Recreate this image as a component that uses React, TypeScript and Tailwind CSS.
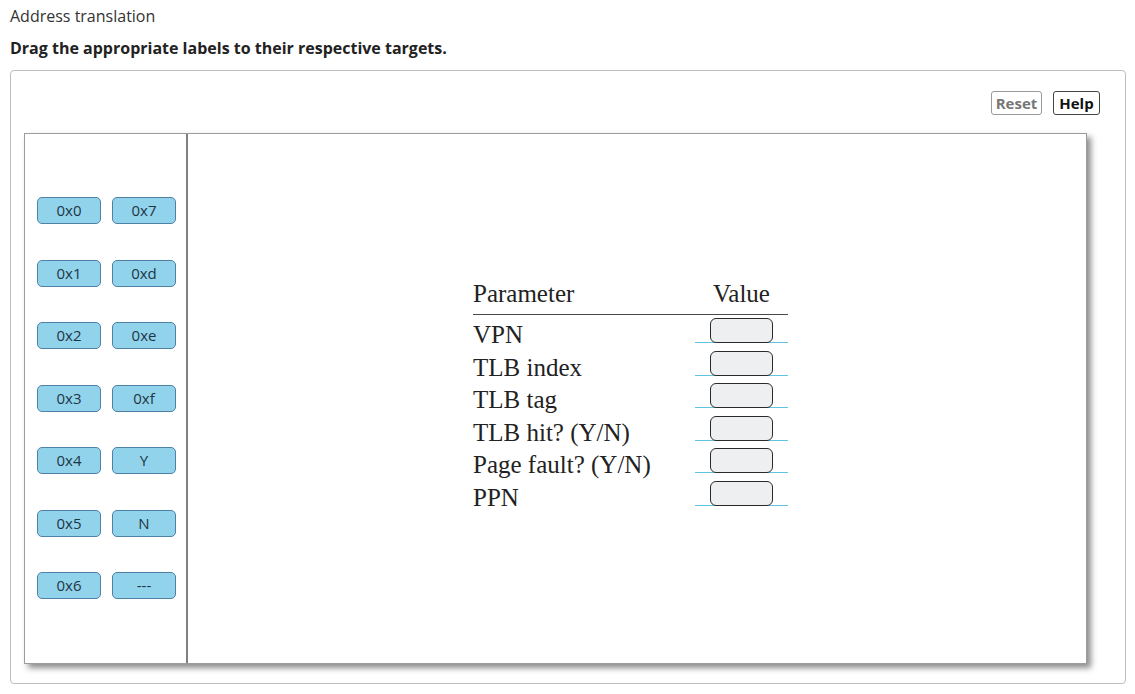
const labels: [string, string][] = [
  ['0x0', '0x7'],
  ['0x1', '0xd'],
  ['0x2', '0xe'],
  ['0x3', '0xf'],
  ['0x4', 'Y'],
  ['0x5', 'N'],
  ['0x6', '---'],
];

const params = [
  'VPN',
  'TLB index',
  'TLB tag',
  'TLB hit? (Y/N)',
  'Page fault? (Y/N)',
  'PPN',
];

function Label({ text }: { text: string }) {
  return (
    <div className="w-[64px] h-[27px] rounded-[5px] border border-[#4f80a6] bg-[#92d3ec] flex items-center justify-center text-[15px] text-[#1d3644]">
      {text}
    </div>
  );
}

export default function App() {
  return (
    <div className="w-[1135px] h-[694px] bg-white font-['Open_Sans','Noto_Sans',sans-serif] overflow-hidden">
      <div className="pl-[10px] pt-[4px] leading-[24px] text-[16px] text-[#333]">
        Address translation
      </div>
      <div className="pl-[10px] pt-[8px] leading-[24px] text-[16px] font-bold text-[#222]">
        Drag the appropriate labels to their respective targets.
      </div>

      <div className="ml-[10px] mt-[10px] w-[1116px] h-[614px] border border-[#bdbdbd] rounded-[4px]">
        {/* toolbar */}
        <div className="flex justify-end gap-[11px] pt-[20px] pr-[25px]">
          <button className="w-[51px] h-[24px] rounded-[3px] border border-[#9a9a9a] text-[15px] font-bold text-[#777] leading-none">
            Reset
          </button>
          <button className="w-[47px] h-[24px] rounded-[3px] border border-[#444] text-[15px] font-bold text-[#111] leading-none">
            Help
          </button>
        </div>

        {/* canvas */}
        <div className="ml-[13px] mt-[18px] w-[1063px] h-[531px] border border-[#9c9c9c] bg-white shadow-[4px_4px_6px_rgba(0,0,0,0.45)] flex">
          <div className="w-[163px] shrink-0 border-r-2 border-[#808080] pl-[12px] pt-[63px] flex flex-col gap-[35.5px]">
            {labels.map(([a, b]) => (
              <div key={a} className="flex gap-[11px]">
                <Label text={a} />
                <Label text={b} />
              </div>
            ))}
          </div>

          <div className="flex-1 pl-[285px] pt-[147px] font-['Liberation_Serif','Times_New_Roman',serif] text-[25px] text-[#222]">
            <div className="w-[315px]">
              <div className="flex leading-[25px] pb-[8px] border-b-[1.5px] border-[#4a4a4a]">
                <div className="w-[222px]">Parameter</div>
                <div className="w-[93px] text-center">Value</div>
              </div>
              {params.map((p) => (
                <div key={p} className="flex h-[32.6px]">
                  <div className="w-[222px] leading-[25px] pt-[7px] whitespace-nowrap">{p}</div>
                  <div className="w-[93px] relative flex justify-center">
                    <div className="absolute left-0 right-0 top-[27px] h-px bg-[#62c3e0]" />
                    <div className="relative mt-[3px] w-[63px] h-[25px] rounded-[6px] border-[1.5px] border-[#2a2a2a] bg-[#eeeff1]" />
                  </div>
                </div>
              ))}
            </div>
          </div>
        </div>
      </div>
    </div>
  );
}
